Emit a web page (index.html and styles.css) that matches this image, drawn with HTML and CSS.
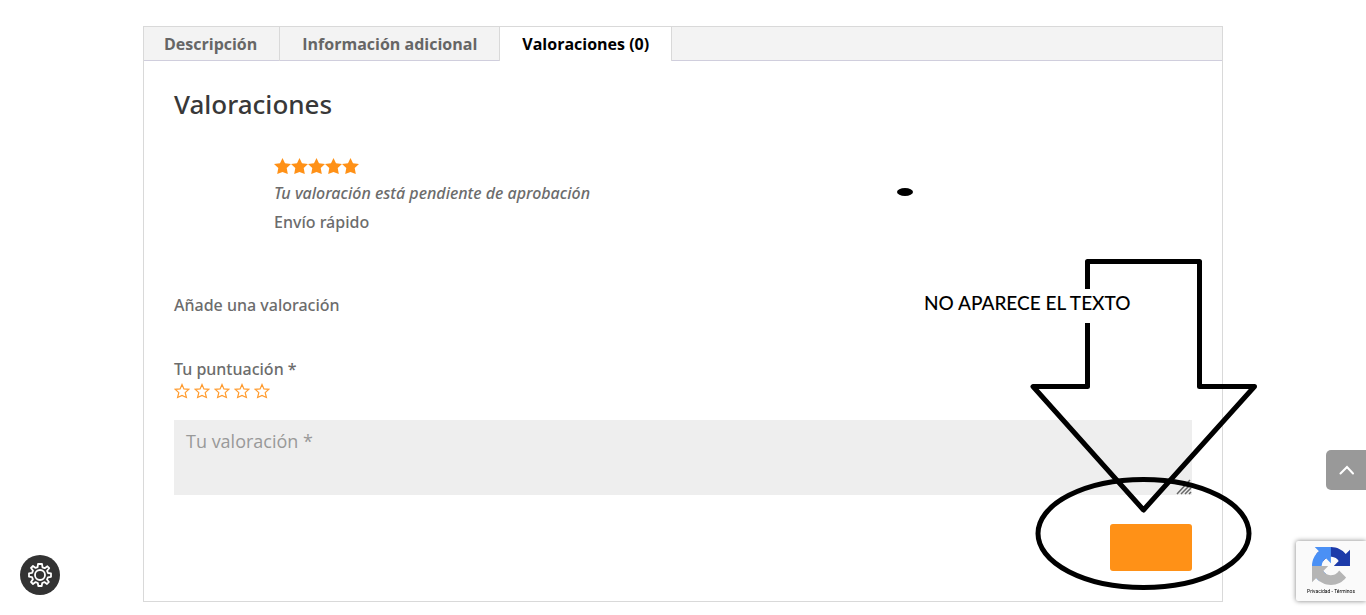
FILE: index.html
```html
<!DOCTYPE html>
<html lang="es">
<head>
<meta charset="utf-8">
<meta name="viewport" content="width=device-width, initial-scale=1">
<title>Valoraciones</title>
<link rel="stylesheet" href="styles.css">
</head>
<body>
<svg class="symbols" aria-hidden="true">
  <symbol id="star" viewBox="0 0 17 16"><path d="M8.500 0L11 5.300L17 6.100L12.700 10L13.800 16L8.500 14L3.200 16L4.300 10L0 6.100L6 5.300Z"/></symbol>
  <symbol id="star-outline" viewBox="0 0 16 16"><path d="M8 1.500L9.900 5.900L14.900 6.300L11.200 9.600L12.400 14.500L8 12.400L3.600 14.500L4.800 9.600L1.100 6.300L6.100 5.900Z"/></symbol>
</svg>
<main class="product">
  <nav class="tabs">
    <a class="tab" href="#descripcion">Descripción</a>
    <a class="tab" href="#informacion">Información adicional</a>
    <a class="tab tab-active" href="#valoraciones" aria-current="true">Valoraciones (0)</a>
  </nav>
  <section class="panel" id="valoraciones">
    <h2 class="panel-title">Valoraciones</h2>
    <article class="review">
      <div class="stars" role="img" aria-label="5 de 5">
        <svg class="star"><use href="#star"/></svg><svg class="star"><use href="#star"/></svg><svg class="star"><use href="#star"/></svg><svg class="star"><use href="#star"/></svg><svg class="star"><use href="#star"/></svg>
      </div>
      <p class="review-status">Tu valoración está pendiente de aprobación</p>
      <p class="review-text">Envío rápido</p>
    </article>
    <form class="review-form">
      <h3 class="form-title">Añade una valoración</h3>
      <fieldset class="rating">
        <legend class="rating-label">Tu puntuación *</legend>
        <div class="rating-options">
          <label class="rating-option"><input type="radio" name="rating" value="1" aria-label="1 estrella"><svg class="rating-star"><use href="#star-outline"/></svg></label>
          <label class="rating-option"><input type="radio" name="rating" value="2" aria-label="2 estrellas"><svg class="rating-star"><use href="#star-outline"/></svg></label>
          <label class="rating-option"><input type="radio" name="rating" value="3" aria-label="3 estrellas"><svg class="rating-star"><use href="#star-outline"/></svg></label>
          <label class="rating-option"><input type="radio" name="rating" value="4" aria-label="4 estrellas"><svg class="rating-star"><use href="#star-outline"/></svg></label>
          <label class="rating-option"><input type="radio" name="rating" value="5" aria-label="5 estrellas"><svg class="rating-star"><use href="#star-outline"/></svg></label>
        </div>
      </fieldset>
      <div class="comment-box">
        <textarea class="comment" name="comment" placeholder="Tu valoración *" aria-label="Tu valoración *"></textarea>
        <svg class="grip" viewBox="0 0 16 16" aria-hidden="true"><path d="M1 15L14 1M5 15L15 5M9 15L15 9M13 15L15 13"/></svg>
      </div>
      <button class="submit" type="submit" aria-label="Enviar"></button>
    </form>
  </section>
  <div class="annotation">
    <svg class="drawing" viewBox="890 180 376 415" aria-hidden="true">
      <ellipse class="dot" cx="905" cy="192" rx="8" ry="4"/>
      <path d="M1087.500 386.500V261.500H1199.500V386.500H1254.500L1143.500 510L1033 386.500Z"/>
      <ellipse cx="1143.500" cy="533.500" rx="105.500" ry="54"/>
    </svg>
    <p class="note">NO APARECE EL TEXTO</p>
  </div>
</main>
<button class="settings" type="button" aria-label="Ajustes">
  <svg class="settings-icon" viewBox="0 0 24 24"><path d="M10 1H14L14.500 4.300L16.700 5.200L19.400 3.300L21.200 5.200L19.100 7.800L20 10L23 10.400V13.800L19.900 14.300L19 16.500L20.900 19L19 21L16.400 19.100L14.200 20L13.700 23H10.300L9.800 20L7.600 19.100L5 21L3 19L4.900 16.400L4 14.200L1 13.700V10.300L4.100 9.800L5 7.600L3 5L5 3L7.600 4.900L9.600 4.200Z"/><circle cx="12" cy="12" r="5"/></svg>
</button>
<button class="to-top" type="button" aria-label="Volver arriba">
  <svg class="to-top-icon" viewBox="0 0 16 10"><path d="M2.500 8.500L9 2L15 8.500"/></svg>
</button>
<aside class="captcha">
  <svg class="captcha-logo" viewBox="0 0 64 64" aria-hidden="true">
    <path fill="#1c3aa9" d="M64 31.955l-.033-1.370V4.687l-7.160 7.160C50.948 4.674 42.033.093 32.050.093c-10.400 0-19.622 4.960-25.458 12.640l11.736 11.860a15.550 15.550 0 0 1 4.754-5.334c2.050-1.600 4.952-2.906 8.968-2.906.485 0 .860.057 1.135.163 4.976.393 9.288 3.140 11.828 7.124l-8.307 8.307z"/>
    <path fill="#4a90f5" d="M31.862.094l-1.370.033H4.594l7.160 7.160C4.580 13.147 0 22.060 0 32.046c0 10.400 4.960 19.622 12.640 25.458L24.500 45.768a15.550 15.550 0 0 1-5.334-4.754c-1.600-2.050-2.906-4.952-2.906-8.968 0-.485.057-.860.163-1.135.393-4.976 3.140-9.288 7.124-11.828l8.307 8.307z"/>
    <path fill="#b5b5b5" d="M.001 32.045l.033 1.370v25.898l7.160-7.160c5.860 7.173 14.774 11.754 24.760 11.754 10.400 0 19.622-4.960 25.458-12.640l-11.736-11.860a15.550 15.550 0 0 1-4.754 5.334c-2.050 1.600-4.952 2.906-8.968 2.906-.485 0-.860-.057-1.135-.163-4.976-.393-9.288-3.140-11.828-7.124l8.307-8.307z"/>
  </svg>
  <div class="captcha-links"><a href="#privacidad">Privacidad</a> - <a href="#terminos">Términos</a></div>
</aside>
</body>
</html>
```

FILE: styles.css
```css
* { box-sizing: border-box; }
body {
  margin: 0;
  background: #fff;
  color: #6c6c6c;
  font: 500 16px/28px "Noto Sans", "Open Sans", sans-serif;
}
h2, h3, p { margin: 0; font-weight: inherit; }
a { color: inherit; text-decoration: none; }
.symbols { position: absolute; width: 0; height: 0; }

.product {
  position: relative;
  max-width: 1080px;
  margin: 26px auto 12px;
  border: 1px solid #d9d9d9;
}

.tabs {
  display: flex;
  background: #f3f3f3;
  box-shadow: inset 0 -1px #d0cedd;
}
.tab {
  padding: 3px 22px;
  border-right: 1px solid #d9d9d9;
  color: #666;
  font-family: "Open Sans", sans-serif;
  font-weight: 700;
}
.tab:first-child { padding-left: 20px; }
.tab-active { background: #fff; color: #000; }

.panel { padding: 30px; }
.panel-title { color: #383838; font-size: 26px; line-height: 26px; }
.review { padding: 41px 0 0 100px; }
.stars { display: flex; height: 21px; }
.star { width: 17px; height: 16px; fill: #ff9117; }
.review-status { font-style: italic; line-height: 29px; }
.review-text { line-height: 29px; }
.form-title { font-size: 16px; line-height: 28px; }
.review-form { display: flex; flex-direction: column; padding-top: 54px; }
.rating { margin: 36px 0 0; padding: 0; border: 0; }
.rating-label { padding: 0; line-height: 28px; }
.rating-options { display: flex; gap: 4px; }
.rating-option { display: flex; }
.rating-option input { position: absolute; margin: 0; opacity: 0; }
.rating-star { width: 16px; height: 16px; fill: none; stroke: #ff9b2e; stroke-width: 1.2; }
.comment-box { position: relative; display: flex; margin-top: 21px; }
.comment {
  flex: 1;
  height: 75px;
  padding: 9px 12px;
  border: 0;
  background: #eee;
  color: #666;
  font: 400 18px/25px "Open Sans", "Noto Sans", sans-serif;
  resize: none;
}
.comment::placeholder { color: #999; opacity: 1; }
.grip { position: absolute; right: 0; bottom: 0; width: 16px; height: 16px; stroke: #666; stroke-width: 1.5; fill: none; }
.submit {
  align-self: flex-end;
  width: 82px;
  height: 47px;
  margin-top: 29px;
  border: 0;
  border-radius: 3px;
  background: #ff9117;
}

.annotation { position: absolute; top: 153px; right: -44px; width: 376px; pointer-events: none; }
.drawing { display: block; width: 376px; height: 415px; fill: none; stroke: #000; stroke-width: 5; stroke-linejoin: round; }
.drawing .dot { fill: #000; stroke: none; }
.note {
  position: absolute;
  top: 109px;
  left: 32px;
  padding: 0 2px 6px;
  background: #fff;
  color: #000;
  font: 500 19px/28px Lato, sans-serif;
  white-space: nowrap;
}

.settings {
  position: fixed;
  left: 20px;
  bottom: 20px;
  display: grid;
  place-items: center;
  width: 40px;
  height: 40px;
  padding: 0;
  border: 0;
  border-radius: 50%;
  background: #333;
}
.settings-icon { width: 24px; height: 24px; fill: none; stroke: #fff; stroke-width: 1.8; stroke-linejoin: round; }
.to-top {
  position: fixed;
  right: 0;
  bottom: 125px;
  display: grid;
  place-items: center;
  width: 40px;
  height: 40px;
  padding: 0;
  border: 0;
  border-radius: 5px 0 0 5px;
  background: #999;
}
.to-top-icon { width: 16px; height: 10px; fill: none; stroke: #fff; stroke-width: 2; stroke-linecap: round; }
.captcha {
  position: fixed;
  right: 0;
  bottom: 14px;
  display: flex;
  flex-direction: column;
  align-items: center;
  width: 70px;
  height: 60px;
  padding-top: 6px;
  border-radius: 2px 0 0 2px;
  background: #fafafa;
  box-shadow: 0 0 5px #808080;
}
.captcha-logo { width: 38px; height: 38px; }
.captcha-links { color: #000; font: 400 5px/12px Roboto, sans-serif; white-space: nowrap; }
```
